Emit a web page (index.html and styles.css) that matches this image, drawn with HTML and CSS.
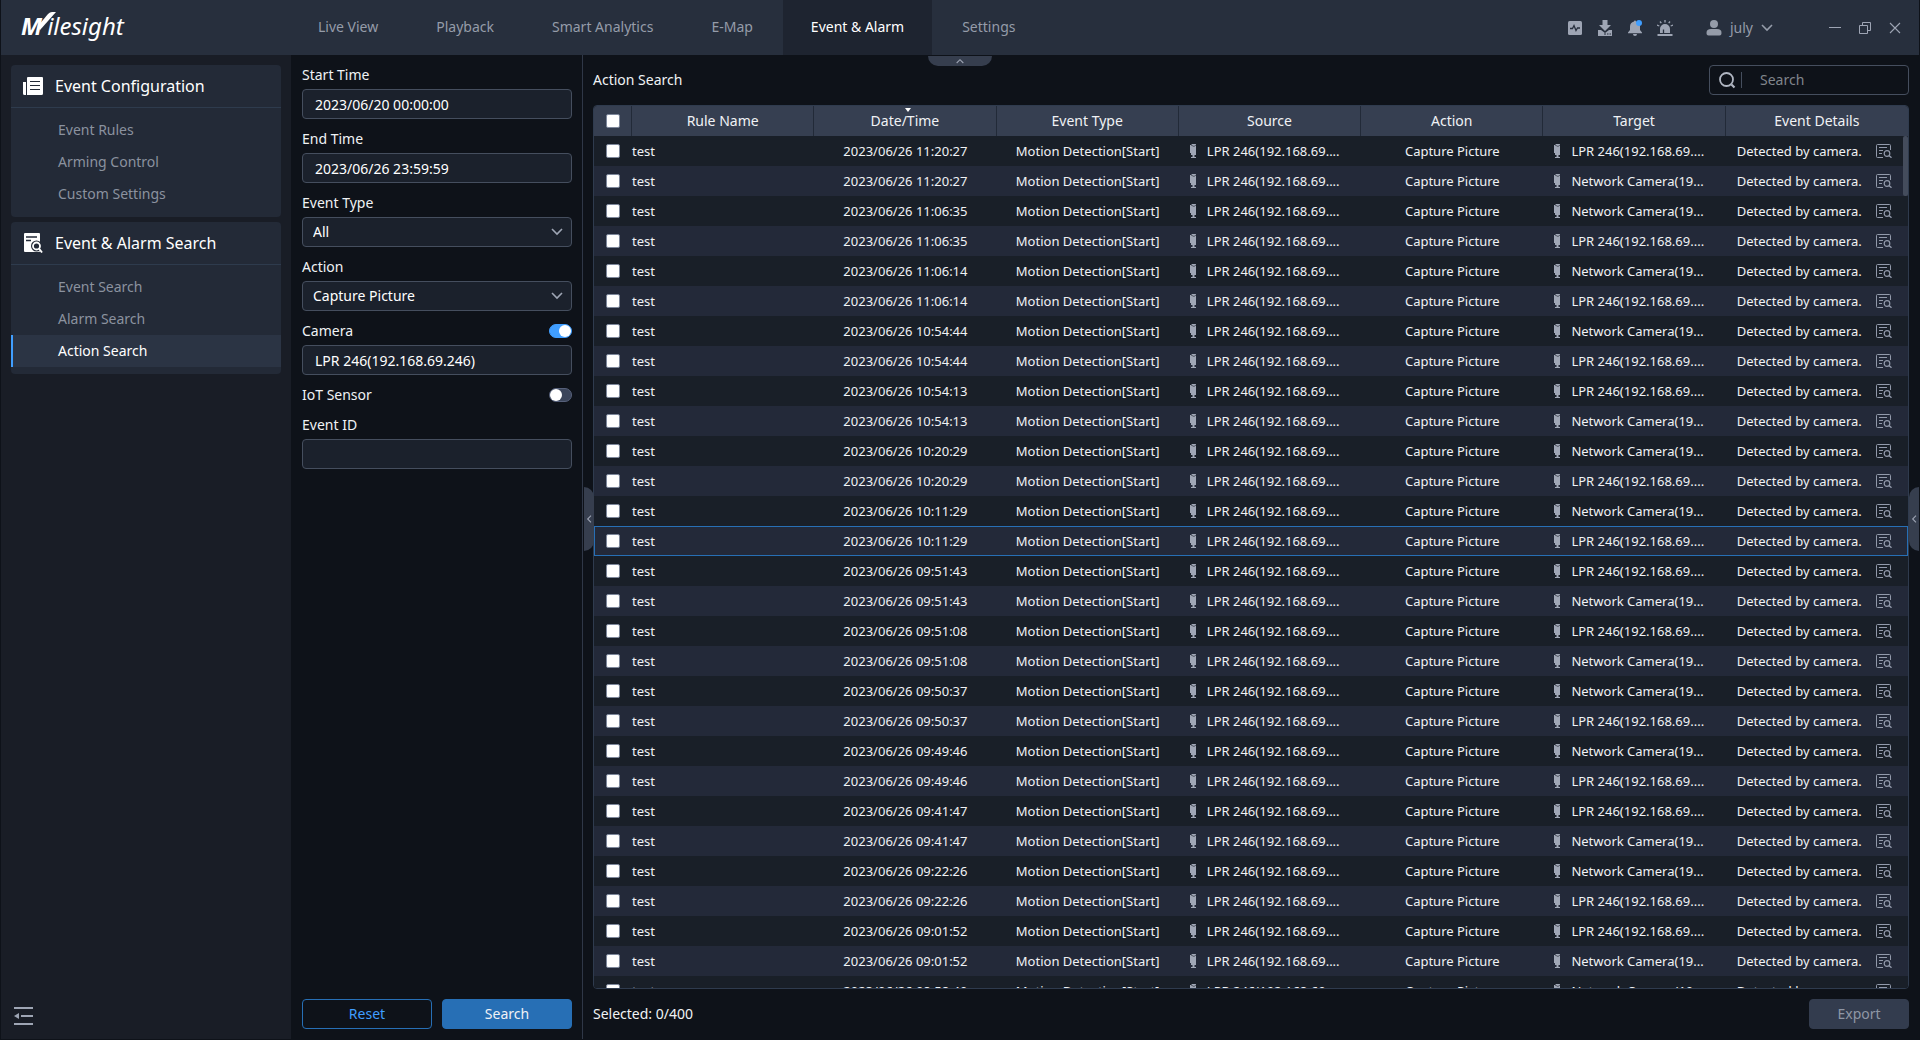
FILE: index.html
```html
<!DOCTYPE html>
<html lang="en">
<head>
<meta charset="UTF-8">
<meta name="viewport" content="width=device-width, initial-scale=1.0">
<title>Event &amp; Alarm - Action Search</title>
<link rel="stylesheet" href="styles.css">
</head>
<body>
<svg class="sprite" aria-hidden="true">
    <symbol id="chevron" viewBox="0 0 12 8">
        <path d="M1 1l5 5 5-5" fill="none" stroke="currentColor" stroke-width="1.6"/>
    </symbol>
    <symbol id="cam" viewBox="0 0 6 14">
        <path d="M0 1h1.500V0H6v11H4.500v2H6v1H1v-1h1.500v-2H1V9H0z" fill="currentColor"/>
        <path d="M1 1l3 1.500L6 1" fill="none" stroke="#191f28" stroke-width=".6"/>
    </symbol>
    <symbol id="detail" viewBox="0 0 16 14">
        <g fill="none" stroke="currentColor">
            <path d="M7 13.500H1.500a1 1 0 0 1-1-1v-11a1 1 0 0 1 1-1h12a1 1 0 0 1 1 1V6"/>
            <path d="M3 3.500h8M3 6.500h4M3 9.500h3"/>
            <circle cx="11" cy="9.500" r="2.800" stroke-width="1.200"/>
            <path d="M13 11.500l2.500 2.300" stroke-width="1.300"/>
        </g>
    </symbol>
</svg>

<header class="topbar">
    <div class="logo">
        <span class="logo-m">M</span><span>ilesight</span>
        <svg class="logo-tick" viewBox="0 0 18 20"><path d="M0 14L10 2Q12 0 14 0h4L2 18z" fill="#fff"/></svg>
    </div>
    <nav class="tabs">
        <a href="#">Live View</a>
        <a href="#">Playback</a>
        <a href="#">Smart Analytics</a>
        <a href="#">E-Map</a>
        <a href="#" class="active">Event &amp; Alarm</a>
        <a href="#">Settings</a>
    </nav>
    <div class="tools">
        <button class="icon-btn" aria-label="Performance">
            <svg width="16" height="16" viewBox="0 0 16 16"><rect x="1" y="1" width="14" height="14" rx="1.500" fill="currentColor"/><path d="M3 8.500h2.500L7 5.500l2 5 1.500-2.500H13" fill="none" stroke="#272f3d" stroke-width="1.300"/></svg>
        </button>
        <button class="icon-btn" aria-label="Downloads">
            <svg width="16" height="16" viewBox="0 0 16 16" fill="currentColor"><path d="M5.500 0h5v5H14L8 11 2 5h3.500z"/><path d="M1 10h3l4 3 4-3h3v6H1z"/><path d="M7 14h2M10 14h1.500M12.500 14H14" stroke="#272f3d"/></svg>
        </button>
        <button class="icon-btn" aria-label="Notifications">
            <svg width="16" height="16" viewBox="0 0 16 16"><path d="M8 0.500a1 1 0 0 1 1 1c2.500.6 4 2.500 4 5V10l2 2.500v.8H1v-.8L3 10V6.500c0-2.500 1.500-4.400 4-5a1 1 0 0 1 1-1zM6 14h4a2 2 0 0 1-4 0z" fill="currentColor"/><circle cx="12" cy="3" r="3" fill="#409eff"/></svg>
        </button>
        <button class="icon-btn" aria-label="Alarms">
            <svg width="16" height="16" viewBox="0 0 16 16" fill="currentColor"><path d="M3 13V9a5 5 0 0 1 10 0v4zM0.500 14h15v2H.5z"/><path d="M8 0v2.500M3 1.500l1.300 1.700M13 1.500l-1.300 1.700M0 5l2.300 1M16 5l-2.300 1" stroke="currentColor" stroke-width="1.300"/><path d="M6.500 13V9.500" stroke="#272f3d" stroke-width="1.300"/></svg>
        </button>
        <button class="user">
            <svg width="16" height="16" viewBox="0 0 16 16" fill="currentColor"><circle cx="8" cy="4" r="4"/><path d="M.5 13c0-3 1.500-4 4.500-4h6c3 0 4.500 1 4.500 4 0 1.500-.5 2.500-2 2.500h-11C1 15.500.5 14.500.5 13z"/></svg>
            <span>july</span>
            <svg width="12" height="8"><use href="#chevron"/></svg>
        </button>
        <div class="window-btns">
            <button class="icon-btn" aria-label="Minimize">
                <svg width="14" height="14" viewBox="0 0 14 14"><path d="M1 6.500h12" stroke="currentColor"/></svg>
            </button>
            <button class="icon-btn" aria-label="Restore">
                <svg width="14" height="14" viewBox="0 0 14 14" fill="none" stroke="currentColor"><path d="M1.500 4.500h8v8h-8zM4.500 4V1.500h8v8H10"/></svg>
            </button>
            <button class="icon-btn" aria-label="Close">
                <svg width="14" height="14" viewBox="0 0 14 14"><path d="M2 2l10 10M12 2L2 12" stroke="currentColor" stroke-width="1.100"/></svg>
            </button>
        </div>
    </div>
</header>

<div class="page">
    <button class="handle handle-top" aria-label="Collapse top bar"><svg width="8" height="6"><use href="#chevron"/></svg></button>

    <aside class="sidebar">
        <section class="menu">
            <h2>
                <svg width="20" height="18" viewBox="0 0 20 18"><path d="M0 5h3v13H1.500A1.500 1.500 0 0 1 0 16.500zM6 0h13a1 1 0 0 1 1 1v15.500a1.500 1.500 0 0 1-1.500 1.500H4V1a1 1 0 0 1 1-1z" fill="#fff"/><path d="M7 4.500h10M7 8.500h10M7 12.500h10" stroke="#232a37" stroke-width="1.200"/></svg>
                Event Configuration
            </h2>
            <ul>
                <li><a href="#">Event Rules</a></li>
                <li><a href="#">Arming Control</a></li>
                <li><a href="#">Custom Settings</a></li>
            </ul>
        </section>
        <section class="menu">
            <h2>
                <svg width="20" height="20" viewBox="0 0 20 20"><path d="M2 0h14a1 1 0 0 1 1 1v17a1 1 0 0 1-1 1H2a1 1 0 0 1-1-1V1a1 1 0 0 1 1-1z" fill="#fff"/><path d="M3 4h11M3 7.500h5" stroke="#232a37" stroke-width="1.500"/><circle cx="13.500" cy="13" r="5.500" fill="#232a37"/><circle cx="13.500" cy="13" r="3.500" fill="none" stroke="#fff" stroke-width="1.800"/><path d="M16 15.500l3 4" stroke="#fff" stroke-width="1.800"/></svg>
                Event &amp; Alarm Search
            </h2>
            <ul>
                <li><a href="#">Event Search</a></li>
                <li><a href="#">Alarm Search</a></li>
                <li><a href="#" class="active">Action Search</a></li>
            </ul>
        </section>
        <button class="icon-btn collapse" aria-label="Collapse menu">
            <svg width="20" height="18" viewBox="0 0 20 18"><path d="M0 1h19M7 9h12M0 17h19" stroke="currentColor" stroke-width="2"/><path d="M0 9l5-3v6z" fill="currentColor"/></svg>
        </button>
    </aside>

    <form class="filters">
        <div class="field">
            <label for="start">Start Time</label>
            <input type="text" id="start" value="2023/06/20 00:00:00">
        </div>
        <div class="field">
            <label for="end">End Time</label>
            <input type="text" id="end" value="2023/06/26 23:59:59">
        </div>
        <div class="field">
            <label for="type">Event Type</label>
            <div class="select">
                <select id="type"><option>All</option></select>
                <svg width="12" height="8"><use href="#chevron"/></svg>
            </div>
        </div>
        <div class="field">
            <label for="action">Action</label>
            <div class="select">
                <select id="action"><option>Capture Picture</option></select>
                <svg width="12" height="8"><use href="#chevron"/></svg>
            </div>
        </div>
        <div class="field">
            <div class="switch-row">
                <label for="camera">Camera</label>
                <input type="checkbox" class="switch" id="camera" checked>
            </div>
            <input type="text" aria-label="Selected camera" value="LPR 246(192.168.69.246)">
        </div>
        <div class="field">
            <div class="switch-row">
                <label for="iot">IoT Sensor</label>
                <input type="checkbox" class="switch" id="iot">
            </div>
        </div>
        <div class="field">
            <label for="eventId">Event ID</label>
            <input type="text" id="eventId">
        </div>
        <div class="actions">
            <button type="button" class="btn btn-outline">Reset</button>
            <button type="button" class="btn btn-primary">Search</button>
        </div>
    </form>

    <main class="results">
        <button class="handle handle-left" aria-label="Collapse filters"><svg width="8" height="6"><use href="#chevron"/></svg></button>
        <button class="handle handle-right" aria-label="Open details"><svg width="8" height="6"><use href="#chevron"/></svg></button>
        <div class="results-head">
            <h1>Action Search</h1>
            <div class="search-box">
                <svg width="17" height="17" viewBox="0 0 17 17" fill="none" stroke="currentColor"><circle cx="7.500" cy="7.500" r="6.500" stroke-width="1.800"/><path d="M12.500 12.500l3 3" stroke-width="2.200"/></svg>
                <input type="search" placeholder="Search" aria-label="Search results">
            </div>
        </div>
        <div class="table-box">
            <table>
                <thead>
                    <tr>
                        <th class="check"><input type="checkbox" aria-label="Select all"></th>
                        <th>Rule Name</th>
                        <th class="sorted">Date/Time</th>
                        <th>Event Type</th>
                        <th>Source</th>
                        <th>Action</th>
                        <th>Target</th>
                        <th>Event Details</th>
                    </tr>
                </thead>
                <tbody id="rows"></tbody>
            </table>
            <div class="thumb"></div>
        </div>
        <div class="results-foot">
            <span>Selected: 0/400</span>
            <button class="btn btn-muted">Export</button>
        </div>
    </main>
</div>

<script>
    var lpr = 'LPR 246(192.168.69....';
    var net = 'Network Camera(19...';
    var selectedRow = 13;

    var events = [
        ['2023/06/26 11:20:27', lpr, net],
        ['2023/06/26 11:06:35', net, lpr],
        ['2023/06/26 11:06:14', net, lpr],
        ['2023/06/26 10:54:44', net, lpr],
        ['2023/06/26 10:54:13', lpr, net],
        ['2023/06/26 10:20:29', net, lpr],
        ['2023/06/26 10:11:29', net, lpr],
        ['2023/06/26 09:51:43', lpr, net],
        ['2023/06/26 09:51:08', lpr, net],
        ['2023/06/26 09:50:37', net, lpr],
        ['2023/06/26 09:49:46', net, lpr],
        ['2023/06/26 09:41:47', lpr, net],
        ['2023/06/26 09:22:26', net, lpr],
        ['2023/06/26 09:01:52', lpr, net],
        ['2023/06/26 08:58:40', net]
    ];

    function cameraCell(name) {
        return '<td><div class="camera"><svg width="6" height="14"><use href="#cam"/></svg>' + name + '</div></td>';
    }

    function renderRows() {
        var html = '';
        var index = 0;
        events.forEach(function(event) {
            event.slice(1).forEach(function(target) {
                html += '<tr' + (index === selectedRow ? ' class="selected"' : '') + '>' +
                    '<td class="check"><input type="checkbox" aria-label="Select row ' + (index + 1) + '"></td>' +
                    '<td class="rule">test</td>' +
                    '<td>' + event[0] + '</td>' +
                    '<td>Motion Detection[Start]</td>' +
                    cameraCell(lpr) +
                    '<td>Capture Picture</td>' +
                    cameraCell(target) +
                    '<td><div class="details">Detected by camera.<button class="icon-btn" aria-label="View details"><svg width="16" height="14"><use href="#detail"/></svg></button></div></td>' +
                    '</tr>';
                index++;
            });
        });
        document.getElementById('rows').innerHTML = html;
    }

    renderRows();
</script>
</body>
</html>
```
FILE: styles.css
```css
* {
    box-sizing: border-box;
}

body {
    display: flex;
    flex-direction: column;
    height: 100vh;
    margin: 0;
    padding: 0 1px 1px;
    overflow: hidden;
    background-color: #0e1219;
    color: #f0f2f5;
    font-family: "Noto Sans", "Open Sans", sans-serif;
    font-size: 14px;
    line-height: 20px;
}

button,
input,
select {
    font: inherit;
    color: inherit;
}

button {
    padding: 0;
    border: none;
    background: none;
    cursor: pointer;
}

a {
    color: inherit;
    text-decoration: none;
}

svg {
    flex: none;
    display: block;
}

.sprite {
    position: absolute;
    width: 0;
    height: 0;
}

.icon-btn {
    color: #9ea5b4;
}

/* top bar */
.topbar {
    display: flex;
    flex: none;
    height: 55px;
    background-color: #272f3d;
    color: #959ca9;
}

.logo {
    position: relative;
    display: flex;
    align-items: baseline;
    width: 289px;
    padding: 8px 0 0 20px;
    color: #fff;
    font-size: 24px;
    font-style: italic;
    line-height: 36px;
}

.logo-m {
    margin-right: 5px;
    font-weight: bold;
}

.logo-tick {
    position: absolute;
    left: 37px;
    top: 12px;
    width: 18px;
    height: 20px;
}

.tabs {
    display: flex;
    gap: 2px;
}

.tabs a {
    padding: 17px 28px 18px;
}

.tabs .active {
    background-color: #1e2430;
    color: #fff;
}

.tools {
    display: flex;
    align-items: center;
    gap: 14px;
    margin-left: auto;
    padding: 0 17px 0 0;
}

.user {
    display: flex;
    align-items: center;
    gap: 8px;
    margin: 0 41px 0 19px;
}

.window-btns {
    display: flex;
    gap: 16px;
}

/* columns */
.page {
    position: relative;
    display: flex;
    flex: 1;
    min-height: 0;
}

.sidebar {
    display: flex;
    flex-direction: column;
    gap: 5px;
    width: 290px;
    padding: 10px;
    background-color: #191d26;
}

.menu {
    padding-bottom: 7px;
    border-radius: 4px;
    background-color: #232a37;
}

.menu h2 {
    display: flex;
    align-items: center;
    gap: 12px;
    height: 43px;
    margin: 0;
    padding-left: 12px;
    border-bottom: 1px solid #2e3b4d;
    color: #fff;
    font-size: 16px;
    font-weight: normal;
}

.menu ul {
    margin: 0;
    padding: 6px 0 0;
    list-style: none;
}

.menu a {
    display: block;
    padding: 6px 0 6px 44px;
    border-left: 3px solid transparent;
    color: #8b929f;
}

.menu .active {
    border-left: 2px solid #409eff;
    padding-left: 45px;
    background-color: #2b3444;
    color: #fff;
}

.collapse {
    align-self: flex-start;
    margin: auto 0 4px 3px;
}

/* filters */
.filters {
    display: flex;
    flex-direction: column;
    gap: 10px;
    width: 292px;
    padding: 10px 10px 10px 11px;
    border-right: 1px solid #2f3747;
}

.field {
    display: flex;
    flex-direction: column;
    gap: 4px;
}

.field input[type="text"],
.select select {
    width: 100%;
    height: 30px;
    padding: 0 12px;
    border: 1px solid #454e5e;
    border-radius: 4px;
    background-color: #1b212c;
    color: #fff;
}

.select {
    position: relative;
}

.select select {
    padding: 0 10px;
    appearance: none;
}

.select svg {
    position: absolute;
    right: 9px;
    top: 11px;
    color: #9ea5b4;
    pointer-events: none;
}

.switch-row {
    display: flex;
    align-items: center;
    justify-content: space-between;
}

.switch {
    display: flex;
    appearance: none;
    width: 23px;
    height: 14px;
    margin: 0;
    border: 1px solid #56607a;
    border-radius: 7px;
    background-color: #3b455a;
}

.switch::before {
    content: "";
    width: 12px;
    height: 12px;
    border-radius: 50%;
    background-color: #fff;
}

.switch:checked {
    justify-content: flex-end;
    border-color: #409eff;
    background-color: #409eff;
}

.actions {
    display: flex;
    gap: 10px;
    margin-top: auto;
}

.btn {
    flex: 1;
    height: 30px;
    border: 1px solid #276fb5;
    border-radius: 4px;
}

.btn-outline {
    color: #409eff;
}

.btn-primary {
    background-color: #276fb5;
}

.btn-muted {
    flex: none;
    width: 100px;
    border-color: #333c4e;
    background-color: #333c4e;
    color: #8f97a5;
}

/* results */
.results {
    position: relative;
    display: flex;
    flex: 1;
    flex-direction: column;
    gap: 10px;
    min-width: 0;
    padding: 10px;
}

.results-head,
.results-foot {
    display: flex;
    align-items: center;
    justify-content: space-between;
}

.results h1 {
    margin: 0;
    font-size: 14px;
    font-weight: normal;
}

.search-box {
    display: flex;
    align-items: center;
    width: 200px;
    height: 30px;
    padding: 0 9px;
    border: 1px solid #454e5e;
    border-radius: 4px;
    color: #b0b6c2;
}

.search-box input {
    width: 100%;
    height: 16px;
    margin-left: 5px;
    padding: 0 0 0 18px;
    border: none;
    border-left: 1px solid #454e5e;
    outline: none;
    background: none;
}

.search-box input::placeholder {
    color: #80858c;
}

.table-box {
    position: relative;
    flex: 1;
    min-height: 0;
    overflow: hidden;
    border: 1px solid #2f3b4e;
    border-radius: 4px;
}

table {
    width: 100%;
    table-layout: fixed;
    border-spacing: 0;
    font-size: 13px;
    text-align: center;
    white-space: nowrap;
}

th {
    height: 30px;
    padding: 0;
    border-right: 1px solid #222a38;
    background-color: #363f51;
    font-size: 14px;
    font-weight: normal;
}

th:last-child {
    border-right: none;
}

th.check {
    width: 38px;
}

.sorted {
    position: relative;
}

.sorted::before {
    content: "";
    position: absolute;
    top: 2px;
    left: 50%;
    border: 3px solid transparent;
    border-top: 4px solid #fff;
    border-bottom: none;
}

td {
    height: 30px;
    padding: 0;
}

tbody tr {
    background-color: #191f28;
}

tbody tr:nth-child(even) {
    background-color: #232939;
}

tbody .selected {
    outline: 1px solid #276fb5;
    outline-offset: -1px;
}

.check input {
    display: block;
    appearance: none;
    width: 14px;
    height: 14px;
    margin: 0 12px;
    border: 1px solid #7d879b;
    border-radius: 2px;
    background-color: #fff;
}

.rule {
    text-align: left;
}

.camera,
.details {
    display: flex;
    align-items: center;
    padding-left: 11px;
}

.camera {
    gap: 11px;
}

.camera svg {
    color: #a0a7b6;
}

.details {
    gap: 14px;
}

.details .icon-btn {
    color: #929aab;
}

.thumb {
    position: absolute;
    top: 30px;
    right: 0;
    width: 5px;
    height: 60px;
    border-radius: 2px;
    background-color: #444c5c;
}

/* collapse handles over the panel edges */
.handle {
    position: absolute;
    z-index: 1;
    display: flex;
    align-items: center;
    justify-content: center;
    background-color: #363e4e;
    color: #9ea5b4;
}

.handle-top {
    top: 1px;
    left: 50%;
    width: 64px;
    height: 10px;
    margin-left: -32px;
    border-radius: 0 0 10px 10px;
}

.handle-top svg {
    transform: rotate(180deg);
}

.handle-left,
.handle-right {
    top: calc(50% - 60px);
    width: 10px;
    height: 64px;
}

.handle-left {
    left: 1px;
    border-radius: 0 10px 10px 0;
}

.handle-right {
    right: 0;
    border-radius: 10px 0 0 10px;
}

.handle-left svg,
.handle-right svg {
    transform: rotate(90deg);
}
```
